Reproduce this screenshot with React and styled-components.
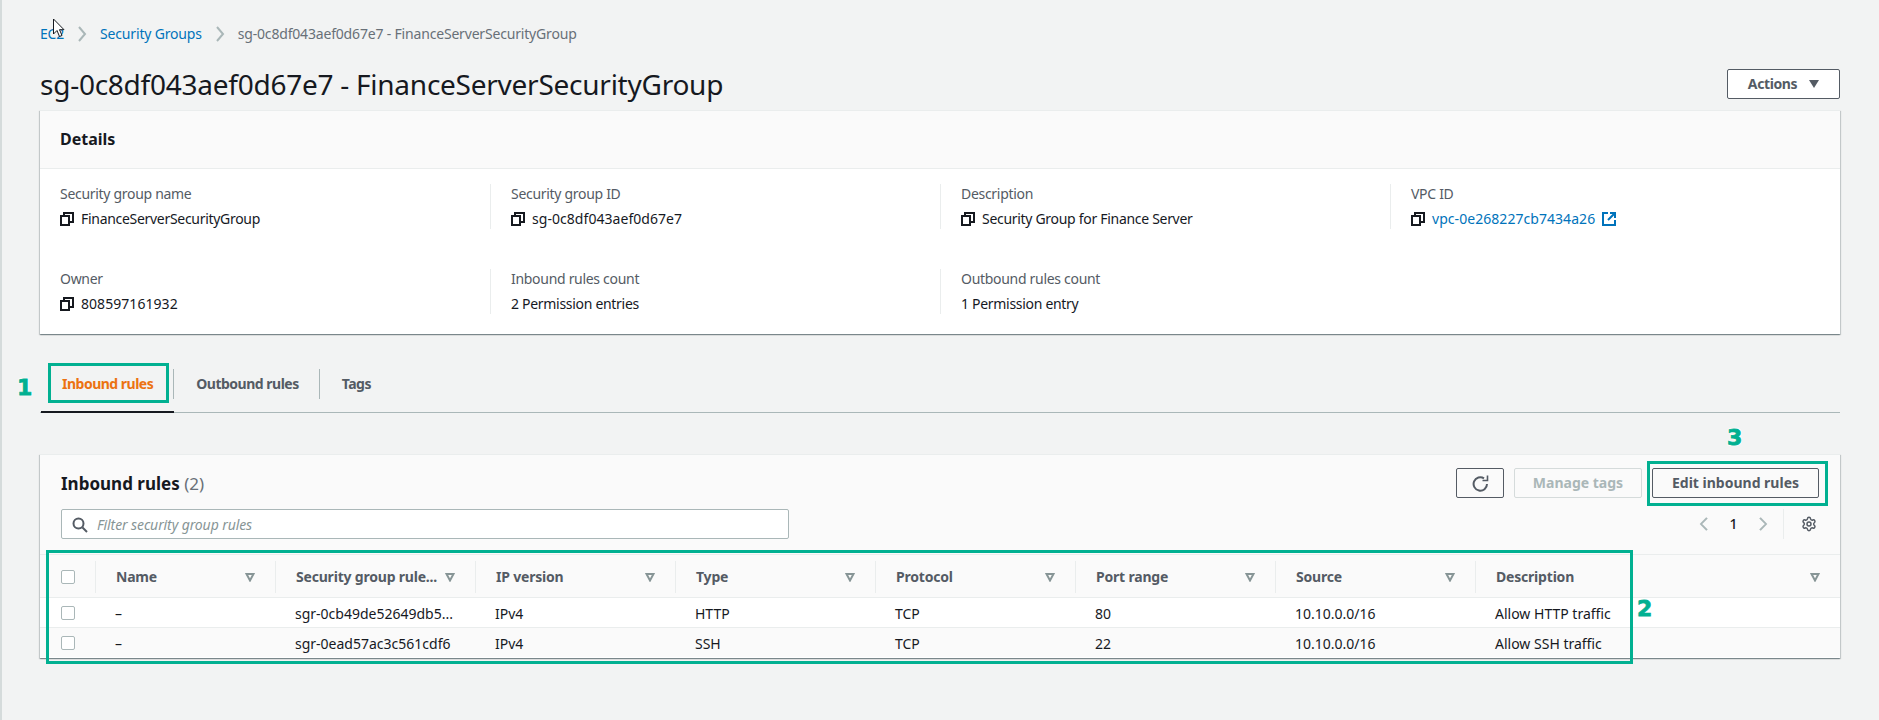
import React from 'react';
import styled, { createGlobalStyle } from 'styled-components';
import { Settings } from 'lucide-react';

const GlobalStyle = createGlobalStyle`
  html, body { margin: 0; padding: 0; background: #f2f3f3; }
  * { box-sizing: border-box; }
`;

const Page = styled.div`
  position: relative;
  width: 1879px;
  height: 720px;
  overflow: hidden;
  padding: 24px 39px 0 38px;
  border-left: 2px solid #d5dbdb;
  background: #f2f3f3;
  color: #16191f;
  font-family: 'Noto Sans', 'Open Sans', sans-serif;
  font-size: 14px;
  line-height: 20px;
`;

const Crumbs = styled.nav`
  display: flex;
  align-items: center;
  gap: 13px;
  height: 20px;
  color: #687078;
  letter-spacing: -0.18px;
`;

const Link = styled.a`
  color: #0073bb;
  text-decoration: none;
`;

const HeaderRow = styled.div`
  display: flex;
  align-items: center;
  justify-content: space-between;
  height: 30px;
  margin: 25px 0 11px;
`;

const Title = styled.h1`
  margin: 0;
  font-size: 28px;
  line-height: 30px;
  font-weight: 400;
  letter-spacing: -0.25px;
`;

const Button = styled.button`
  display: inline-flex;
  align-items: center;
  justify-content: center;
  gap: 12px;
  height: 30px;
  width: ${({ $w }) => $w}px;
  padding: 0;
  background: ${({ $plain }) => ($plain ? '#fafafa' : '#fff')};
  border: 1px solid ${({ disabled }) => (disabled ? '#d5dbdb' : '#545b64')};
  border-radius: 2px;
  color: ${({ disabled }) => (disabled ? '#aab7b8' : '#545b64')};
  font: 700 14px/20px 'Noto Sans', sans-serif;
`;

const ActionsLabel = styled.span`
  letter-spacing: -0.4px;
`;

const Card = styled.section`
  background: #fff;
  border-top: 1px solid #eaeded;
  box-shadow: 0 1px 1px 0 rgba(0, 28, 36, 0.3), 1px 1px 1px 0 rgba(0, 28, 36, 0.15),
    -1px 1px 1px 0 rgba(0, 28, 36, 0.15);
`;

const CardHead = styled.header`
  display: flex;
  align-items: center;
  height: 58px;
  padding: 0 20px 2px;
  background: #fafafa;
  border-bottom: 1px solid #eaeded;
  font-size: 16px;
  font-weight: 700;
`;

const DetailGrid = styled.div`
  display: grid;
  grid-template-columns: repeat(4, 450px);
  row-gap: 40px;
  padding: 15px 0 20px;
`;

const Field = styled.div`
  height: 45px;
  padding-left: ${({ $first }) => ($first ? 19 : 20)}px;
  border-left: 1px solid ${({ $first }) => ($first ? 'transparent' : '#eaeded')};
`;

const Label = styled.div`
  color: #545b64;
  letter-spacing: -0.3px;
`;

const Value = styled.div`
  display: flex;
  align-items: center;
  gap: 7px;
  height: 20px;
  margin-top: 5px;
`;

const ValueText = styled.span`
  letter-spacing: ${({ $digits }) => ($digits ? '0.05px' : '-0.3px')};
`;

const TabList = styled.div`
  display: flex;
  height: 49px;
  margin-top: 30px;
  padding-left: 1px;
  border-bottom: 1px solid #aab7b8;
`;

const Tab = styled.div`
  height: 49px;
  padding: 5px 0 13px;
  border-bottom: ${({ $active }) => ($active ? '2px solid #16191f' : 'none')};
  color: ${({ $active }) => ($active ? '#ec7211' : '#545b64')};
  font-weight: 700;
  letter-spacing: -0.5px;
`;

const TabLabel = styled.span`
  display: flex;
  align-items: center;
  height: 30px;
  padding: 0 20px 0 ${({ $first }) => ($first ? 21 : 22)}px;
  border-right: ${({ $last }) => ($last ? 'none' : '1px solid #aab7b8')};
`;

const RulesCard = styled(Card)`
  margin-top: 41px;
  padding-bottom: 1px;
`;

const RulesHead = styled.div`
  background: #fafafa;
  padding: 13px 21px 15px;
`;

const TopRow = styled.div`
  display: flex;
  align-items: center;
  justify-content: space-between;
  height: 30px;
`;

const RulesTitle = styled.h2`
  margin: 2px 0 0;
  font-size: 17px;
  line-height: 22px;
  font-weight: 700;
  span {
    color: #687078;
    font-weight: 400;
  }
`;

const Actions = styled.div`
  display: flex;
  gap: 10px;
`;

const FilterRow = styled(TopRow)`
  margin-top: 11px;
`;

const SearchBox = styled.div`
  display: flex;
  align-items: center;
  gap: 9px;
  width: 728px;
  height: 30px;
  padding: 2px 0 0 10px;
  background: #fff;
  border: 1px solid #aab7b8;
  border-radius: 2px;
  color: #879596;
  font-style: italic;
  letter-spacing: -0.1px;
`;

const Pager = styled.div`
  display: flex;
  align-items: center;
  height: 30px;
  padding-right: 2px;
  font-weight: 500;
`;

const PageNo = styled.span`
  width: 49px;
  text-align: center;
`;

const PagerSep = styled.span`
  width: 1px;
  height: 30px;
  margin: 0 17px 0 15px;
  background: #eaeded;
`;

const Row = styled.div`
  display: grid;
  grid-template-columns: 55px 180px repeat(6, 200px) 1fr;
  align-items: center;
  height: ${({ $head }) => ($head ? 43 : 30)}px;
  padding-top: 2px;
  background: ${({ $alt }) => ($alt ? '#fafafa' : '#fff')};
  border-top: 1px solid #eaeded;
`;

const HeadCell = styled.div`
  display: flex;
  align-items: center;
  justify-content: space-between;
  height: 32px;
  padding: 0 20px 0 20px;
  border-left: 1px solid #eaeded;
  color: #545b64;
  font-weight: 700;
  white-space: nowrap;
  letter-spacing: -0.2px;
`;

const CheckCell = styled.div`
  padding-left: 21px;
  margin-top: ${({ $row }) => ($row ? -2 : 0)}px;
`;

const Cell = styled.div`
  padding-left: 20px;
  white-space: nowrap;
`;

const Check = styled.span`
  display: block;
  width: 14px;
  height: 14px;
  background: #fff;
  border: 1px solid #aab7b8;
  border-radius: 2px;
`;

const Highlight = styled.div`
  position: absolute;
  left: ${({ $x }) => $x}px;
  top: ${({ $y }) => $y}px;
  width: ${({ $w }) => $w}px;
  height: ${({ $h }) => $h}px;
  border: 3px solid #01b091;
`;

const Step = styled.span`
  position: absolute;
  left: ${({ $x }) => $x}px;
  top: ${({ $y }) => $y}px;
  color: #01b091;
  font: 700 22px/24px 'DejaVu Sans', sans-serif;
  -webkit-text-stroke: 0.8px #01b091;
  text-shadow: 0 0 2px #fff, 1px 1px 1px #fff, -1px -1px 1px #fff, 1px -1px 1px #fff, -1px 1px 1px #fff;
`;

const Pointer = styled.svg`
  position: absolute;
  left: 50px;
  top: 18px;
`;

const CopyIcon = () => (
  <svg width="14" height="14" viewBox="0 0 14 14" fill="none" stroke="#16191f" strokeWidth="2">
    <rect x="1" y="4" width="8" height="9" />
    <path d="M4 4V1h9v9h-4" strokeWidth="2" />
  </svg>
);

const ExternalIcon = () => (
  <svg width="14" height="14" viewBox="0 0 14 14" fill="none" stroke="#0073bb" strokeWidth="2">
    <path d="M6 1H1v12h12V8" />
    <path d="M8 1h5v5M13 1L6 8" />
  </svg>
);

const Chevron = ({ dir = 'right', color = '#aab7b8', h = 16 }) => (
  <svg width="10" height={h} viewBox="0 0 10 16" fill="none" stroke={color} strokeWidth="2" preserveAspectRatio="none">
    <path d={dir === 'right' ? 'M2 1l6 7-6 7' : 'M8 1L2 8l6 7'} />
  </svg>
);

const CaretDown = () => (
  <svg width="10" height="8" viewBox="0 0 10 8">
    <path d="M0 0h10L5 8z" fill="#545b64" />
  </svg>
);

const SortIcon = () => (
  <svg width="10" height="9" viewBox="0 0 10 9" fill="none" stroke="#879596" strokeWidth="2">
    <path d="M1.5 1h7L5 7.5z" />
  </svg>
);

const RefreshIcon = () => (
  <svg width="17" height="17" viewBox="0 0 17 17" fill="none" stroke="#545b64" strokeWidth="2">
    <path d="M15 9a6.7 6.7 0 1 1-3-5.6" />
    <path d="M15.5 0.5V5.5H10.5" strokeWidth="1.6" />
  </svg>
);

const SearchIcon = () => (
  <svg width="16" height="16" viewBox="0 0 16 16" fill="none" stroke="#545b64" strokeWidth="2">
    <circle cx="6.5" cy="6.5" r="5" />
    <path d="M10.5 10.5l4.5 4.5" />
  </svg>
);

const columns = ['Security group rule...', 'IP version', 'Type', 'Protocol', 'Port range', 'Source', 'Description'];

const rules = [
  ['–', 'sgr-0cb49de52649db5...', 'IPv4', 'HTTP', 'TCP', '80', '10.10.0.0/16', 'Allow HTTP traffic'],
  ['–', 'sgr-0ead57ac3c561cdf6', 'IPv4', 'SSH', 'TCP', '22', '10.10.0.0/16', 'Allow SSH traffic'],
];

const details = [
  { label: 'Security group name', value: 'FinanceServerSecurityGroup', copy: true },
  { label: 'Security group ID', value: 'sg-0c8df043aef0d67e7', copy: true, digits: true },
  { label: 'Description', value: 'Security Group for Finance Server', copy: true },
  { label: 'VPC ID', value: 'vpc-0e268227cb7434a26', copy: true, link: true, digits: true },
  { label: 'Owner', value: '808597161932', copy: true, digits: true },
  { label: 'Inbound rules count', value: '2 Permission entries' },
  { label: 'Outbound rules count', value: '1 Permission entry' },
];

export default function App() {
  return (
    <Page>
      <GlobalStyle />
      <Crumbs>
        <Link>EC2</Link>
        <Chevron />
        <Link>Security Groups</Link>
        <Chevron />
        <span>sg-0c8df043aef0d67e7 - FinanceServerSecurityGroup</span>
      </Crumbs>

      <HeaderRow>
        <Title>sg-0c8df043aef0d67e7 - FinanceServerSecurityGroup</Title>
        <Button $w={113}>
          <ActionsLabel>Actions</ActionsLabel> <CaretDown />
        </Button>
      </HeaderRow>

      <Card>
        <CardHead>Details</CardHead>
        <DetailGrid>
          {details.map((d, i) => (
            <Field key={d.label} $first={i % 4 === 0}>
              <Label>{d.label}</Label>
              <Value>
                {d.copy && <CopyIcon />}
                <ValueText $digits={d.digits}>{d.link ? <Link>{d.value}</Link> : d.value}</ValueText>
                {d.link && <ExternalIcon />}
              </Value>
            </Field>
          ))}
        </DetailGrid>
      </Card>

      <TabList>
        <Tab $active>
          <TabLabel $first>Inbound rules</TabLabel>
        </Tab>
        <Tab>
          <TabLabel>Outbound rules</TabLabel>
        </Tab>
        <Tab>
          <TabLabel $last>Tags</TabLabel>
        </Tab>
      </TabList>

      <RulesCard>
        <RulesHead>
          <TopRow>
            <RulesTitle>
              Inbound rules <span>(2)</span>
            </RulesTitle>
            <Actions>
              <Button $w={48} $plain>
                <RefreshIcon />
              </Button>
              <Button $w={128} $plain disabled>
                Manage tags
              </Button>
              <Button $w={167} $plain>
                Edit inbound rules
              </Button>
            </Actions>
          </TopRow>
          <FilterRow>
            <SearchBox>
              <SearchIcon />
              Filter security group rules
            </SearchBox>
            <Pager>
              <Chevron dir="left" h={14} />
              <PageNo>1</PageNo>
              <Chevron h={14} />
              <PagerSep />
              <Settings size={16} color="#545b64" strokeWidth={2.2} />
            </Pager>
          </FilterRow>
        </RulesHead>
        <Row $head $alt>
          <CheckCell>
            <Check />
          </CheckCell>
          <HeadCell>
            Name <SortIcon />
          </HeadCell>
          {columns.map((c) => (
            <HeadCell key={c}>
              {c} <SortIcon />
            </HeadCell>
          ))}
        </Row>
        {rules.map((r, i) => (
          <Row key={r[1]} $alt={i === 1}>
            <CheckCell $row>
              <Check />
            </CheckCell>
            {r.map((v, j) => (
              <Cell key={j}>{v}</Cell>
            ))}
          </Row>
        ))}
      </RulesCard>

      <Pointer width="14" height="20" viewBox="0 0 14 20">
        <path d="M1.5 1v15l3.5-3.5 2.5 6 2.5-1-2.5-5.8H12z" fill="#fff" stroke="#16191f" strokeWidth="1" />
      </Pointer>

      <Highlight $x={46} $y={363} $w={121} $h={40} />
      <Highlight $x={44} $y={550} $w={1587} $h={114} />
      <Highlight $x={1645} $y={461} $w={181} $h={45} />
      <Step $x={15} $y={376}>1</Step>
      <Step $x={1635} $y={597}>2</Step>
      <Step $x={1725} $y={426}>3</Step>
    </Page>
  );
}
